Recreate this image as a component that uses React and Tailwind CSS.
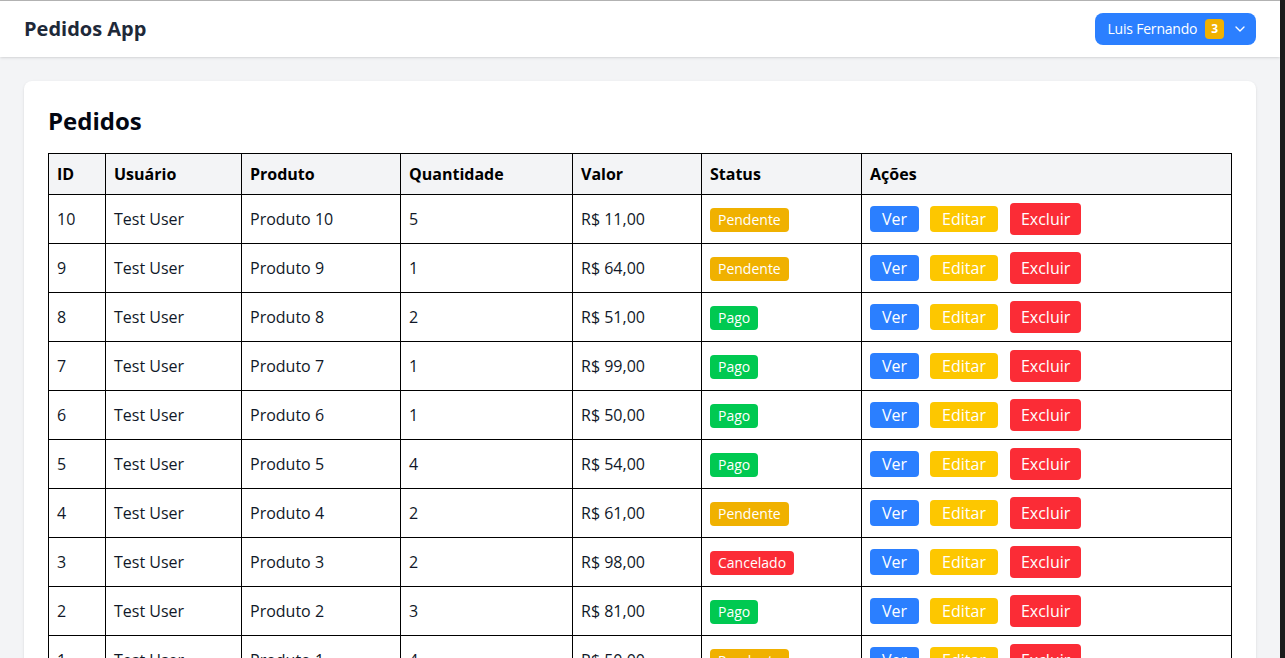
import React from "react";
import { ChevronDown } from "lucide-react";

const rows = [
  [10, 5, "11,00", "Pendente"],
  [9, 1, "64,00", "Pendente"],
  [8, 2, "51,00", "Pago"],
  [7, 1, "99,00", "Pago"],
  [6, 1, "50,00", "Pago"],
  [5, 4, "54,00", "Pago"],
  [4, 2, "61,00", "Pendente"],
  [3, 2, "98,00", "Cancelado"],
  [2, 3, "81,00", "Pago"],
  [1, 4, "50,00", "Pendente"],
];

function Badge({ s }) {
  const cls =
    s === "Pago"
      ? "bg-green-500"
      : s === "Cancelado"
      ? "bg-red-500"
      : "bg-yellow-500";
  return (
    <span className={`inline-block ${cls} text-white text-sm leading-5 px-2 py-0.5 rounded`}>
      {s}
    </span>
  );
}

export default function App() {
  return (
    <div
      className="flex w-[1285px] h-[658px] overflow-hidden bg-gray-100"
      style={{ fontFamily: '"Open Sans", "Noto Sans", sans-serif' }}
    >
      <div className="flex-1 flex flex-col min-w-0">
        <div className="h-px shrink-0 bg-[#b5b5b5]" />
        <header className="h-[56px] shrink-0 bg-white shadow flex items-center justify-between px-6 relative z-10">
          <div className="text-xl font-bold text-gray-800">Pedidos App</div>
          <button className="flex items-center h-8 bg-blue-500 text-white text-sm rounded-lg pl-3 pr-2 tracking-[-0.2px]">
            <span>Luis Fernando</span>
            <span className="ml-2 bg-yellow-500 text-white text-xs font-bold rounded px-1.5 leading-5">3</span>
            <ChevronDown className="ml-2 w-4 h-4" strokeWidth={2} />
          </button>
        </header>
        <main className="p-6 shrink-0">
          <div className="bg-white rounded-lg shadow p-6">
            <h1 className="text-2xl font-bold text-gray-950 leading-8 mb-4">Pedidos</h1>
            <table className="w-full border-collapse border border-black text-base text-gray-900">
              <thead>
                <tr className="bg-gray-100">
                  {[
                    ["ID", "w-[57px]"],
                    ["Usuário", "w-[136px]"],
                    ["Produto", "w-[159px]"],
                    ["Quantidade", "w-[172px]"],
                    ["Valor", "w-[129px]"],
                    ["Status", "w-[160px]"],
                    ["Ações", ""],
                  ].map(([h, w]) => (
                    <th key={h} className={`${w} border border-black px-2 py-2 text-left font-bold leading-6 text-black`}>
                      {h}
                    </th>
                  ))}
                </tr>
              </thead>
              <tbody>
                {rows.map(([id, q, v, s]) => (
                  <tr key={id} className="h-[49px]">
                    <td className="border border-black px-2 py-2">{id}</td>
                    <td className="border border-black px-2 py-2">Test User</td>
                    <td className="border border-black px-2 py-2">Produto {id}</td>
                    <td className="border border-black px-2 py-2">{q}</td>
                    <td className="border border-black px-2 py-2">R$ {v}</td>
                    <td className="border border-black px-2 py-2">
                      <Badge s={s} />
                    </td>
                    <td className="border border-black px-2 py-2">
                      <div className="flex items-center">
                        <button className="bg-blue-500 text-white rounded px-3 h-[26px] leading-[26px]">Ver</button>
                        <button className="ml-[11px] bg-yellow-400 text-white rounded px-3 h-[26px] leading-[26px]">Editar</button>
                        <button className="ml-3 bg-red-500 text-white rounded px-[11px] h-8 leading-8">Excluir</button>
                      </div>
                    </td>
                  </tr>
                ))}
              </tbody>
            </table>
          </div>
        </main>
      </div>
      <div className="w-[5px] shrink-0 bg-[#1b1b1b]" />
    </div>
  );
}
